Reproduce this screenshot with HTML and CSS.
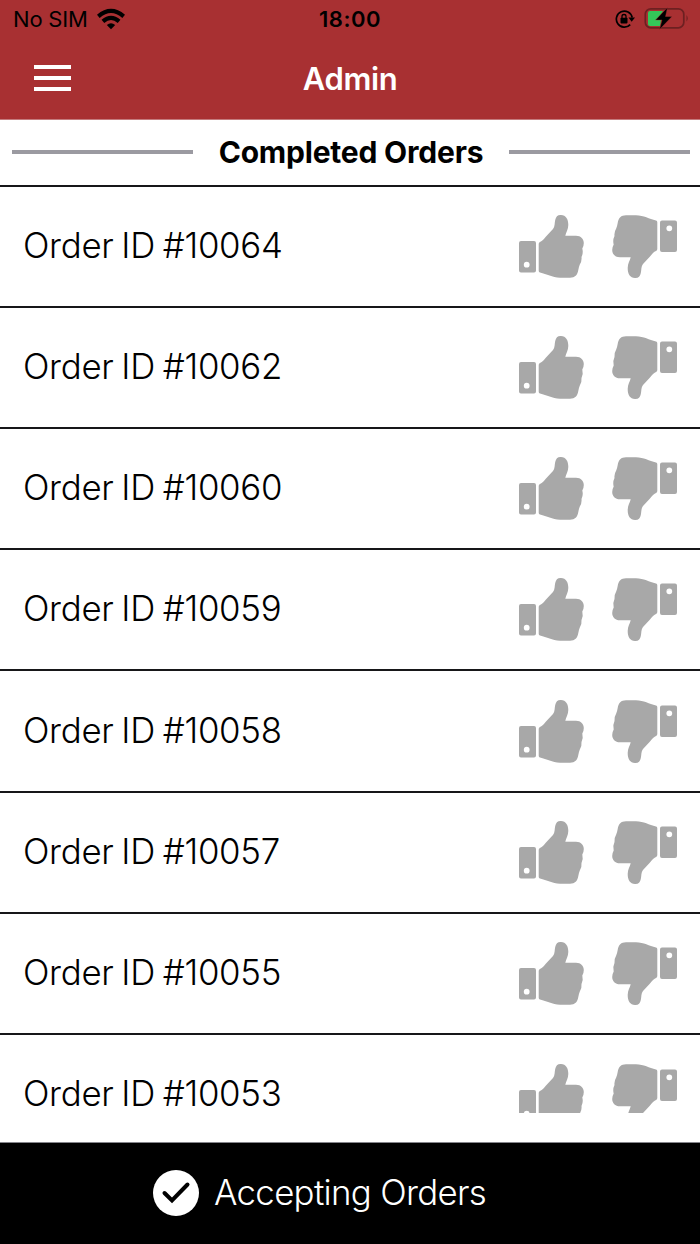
FILE: index.html
```
<!DOCTYPE html>
<html lang="en">
<head>
<meta charset="utf-8">
<title>Admin</title>
<link rel="stylesheet" href="styles.css">
</head>
<body>
<svg width="0" height="0" class="defs">
  <symbol id="thumb" viewBox="0 0 67 65">
    <path fill-rule="evenodd" d="M3 27H16Q18 27 18 29V56.500Q18 58.500 16 58.500H3Q1 58.500 1 56.500V29Q1 27 3 27ZM8.700 47.800A2.900 2.900 0 1 0 8.700 53.600A2.900 2.900 0 1 0 8.700 47.800Z"/>
    <path d="M20.700 30Q20.700 28.500 22 28C24.500 27 26 25 28 22.500L35 15C37 12.500 36.500 9 37.200 6C38 2.500 39.500.7 43 .9C48 1.200 50.300 5 50.300 11C50.300 15.500 48 18.500 47.300 21.700H58C63 21.700 65.800 25 65.800 29Q65.800 32 64.300 34.500Q65.500 39 63.500 43Q64 47 61.800 50.500Q60.800 53 60.300 56C59.500 61 57 63.700 52 63.700H42C34 63.500 29 60 22 58.500Q20.700 58.200 20.700 56.800Z"/>
  </symbol>
</svg>
<div class="phone">
  <header class="header">
    <div class="status">
      <div class="carrier"><span>No SIM</span>
        <svg class="wifi" width="28" height="22" viewBox="0 0 28 22"><g fill="none" stroke="#000" stroke-width="4.200"><path d="M1.300 8.300Q14-2.600 26.700 8.300"/><path d="M5.900 13.300Q14 6.500 22.100 13.300"/></g><path d="M9.800 17Q14 13.300 18.200 17L14 21.200Z"/></svg>
      </div>
      <div class="clock">18:00</div>
      <div class="indicators">
        <svg width="20" height="20" viewBox="0 0 20 20"><path d="M15.200 15.600A8 8 0 1 1 17.200 8.500" fill="none" stroke="#000" stroke-width="1.700"/><path d="M13.500 8.500H20L16.700 12.800Z"/><rect x="5.500" y="8.800" width="7" height="5.600" rx=".8"/><path d="M7 9V7.300Q7 5.500 9 5.500T11 7.300V9" fill="none" stroke="#000" stroke-width="1.300"/></svg>
        <svg width="46" height="24" viewBox="0 0 46 24"><rect x="1.300" y="2.800" width="38.500" height="19" rx="5.500" fill="none" stroke="#6d2021" stroke-width="1.700"/><path d="M42.500 9Q45 12.300 42.500 15.500Z" fill="#6d2021"/><path d="M6 5H19L13 14H17L16 20H6Q4 20 4 18V7Q4 5 6 5Z" fill="#34c759"/><path d="M23.500 1.500L11.500 14H18L15.500 23.500L28 10.500H21.500Z" stroke="#a83032" stroke-width=".4"/></svg>
      </div>
    </div>
    <div class="nav">
      <div class="menu"><i></i><i></i><i></i></div>
      <h1>Admin</h1>
    </div>
  </header>
  <div class="section"><i></i><h2>Completed Orders</h2><i></i></div>
  <main class="list">
    <div class="row"><span>Order ID #10064</span><div class="votes"><svg><use href="#thumb"/></svg><svg class="down"><use href="#thumb"/></svg></div></div>
    <div class="row"><span>Order ID #10062</span><div class="votes"><svg><use href="#thumb"/></svg><svg class="down"><use href="#thumb"/></svg></div></div>
    <div class="row"><span>Order ID #10060</span><div class="votes"><svg><use href="#thumb"/></svg><svg class="down"><use href="#thumb"/></svg></div></div>
    <div class="row"><span>Order ID #10059</span><div class="votes"><svg><use href="#thumb"/></svg><svg class="down"><use href="#thumb"/></svg></div></div>
    <div class="row"><span>Order ID #10058</span><div class="votes"><svg><use href="#thumb"/></svg><svg class="down"><use href="#thumb"/></svg></div></div>
    <div class="row"><span>Order ID #10057</span><div class="votes"><svg><use href="#thumb"/></svg><svg class="down"><use href="#thumb"/></svg></div></div>
    <div class="row"><span>Order ID #10055</span><div class="votes"><svg><use href="#thumb"/></svg><svg class="down"><use href="#thumb"/></svg></div></div>
    <div class="row"><span>Order ID #10053</span><div class="votes clipped"><svg><use href="#thumb"/></svg><svg class="down"><use href="#thumb"/></svg></div></div>
  </main>
  <footer class="footer">
    <svg width="46" height="46" viewBox="0 0 46 46"><circle cx="23" cy="23" r="23" fill="#fff"/><path d="M11.500 23L19 30.500L34.500 14.500" fill="none" stroke="#000" stroke-width="4" stroke-linecap="round"/></svg>
    <span>Accepting Orders</span>
  </footer>
</div>
</body>
</html>
```
FILE: styles.css
```
* { box-sizing: border-box; }
body { margin: 0; background: #fff; font-family: Inter, "Liberation Sans", sans-serif; color: #000; }
.defs { display: block; position: absolute; }
.phone { width: 700px; height: 1244px; display: flex; flex-direction: column; overflow: hidden; }
.header { height: 120px; flex: none; background: #a83032; border-bottom: 1px solid #c47b7d; }
.status { height: 38px; display: grid; grid-template-columns: 1fr auto 1fr; align-items: center; padding: 0 10px 0 13px; font-size: 22px; }
.carrier { display: flex; align-items: center; gap: 9px; letter-spacing: -0.2px; }
.carrier svg { margin-bottom: 1px; }
.clock { font-weight: 600; letter-spacing: 0.5px; margin-right: 3px; }
.indicators { display: flex; align-items: center; justify-content: flex-end; gap: 9px; }
.indicators svg:last-child { margin: 0 0 2px; }
.nav { height: 80px; display: grid; grid-template-columns: 1fr auto 1fr; align-items: center; padding: 0 34px; }
.menu { display: flex; flex-direction: column; gap: 7px; width: 37px; margin-bottom: 1px; }
.menu i { height: 4px; background: #fff; }
h1 { margin: 0; font-size: 31px; font-weight: 600; color: #fff; letter-spacing: -0.4px; }
.section { height: 64px; flex: none; display: flex; align-items: center; justify-content: space-between; padding: 0 10px 0 12px; }
.section i { width: 181px; height: 4px; background: #9b9aa1; }
h2 { margin: 0; font-size: 30px; font-weight: 700; letter-spacing: -0.2px; white-space: nowrap; }
.list { height: 958px; flex: none; overflow: hidden; }
.row { height: 121.2px; border-top: 2px solid #171719; padding: 0 22px 0 23px; display: flex; justify-content: space-between; align-items: center; font-size: 34.800px; font-weight: 300; }
.row:first-child { margin-top: 0.7px; }
.row span { letter-spacing: -0.3px; word-spacing: -1.6px; white-space: nowrap; padding-bottom: 3px; }
.votes { display: flex; gap: 26px; height: 65px; fill: #a8a8a8; }
.votes svg { width: 67px; height: 65px; flex: none; }
.down { transform: rotate(180deg); }
.clipped { height: 50px; overflow: hidden; margin-bottom: 14px; }
.footer { flex: 1; background: #000; border-top: 1px solid #85858b; color: #fff; display: flex; align-items: center; padding: 0 0 2px 153px; gap: 15px; font-size: 34.800px; font-weight: 300; letter-spacing: -0.68px; white-space: nowrap; }
.footer span { padding-bottom: 2px; }
```
